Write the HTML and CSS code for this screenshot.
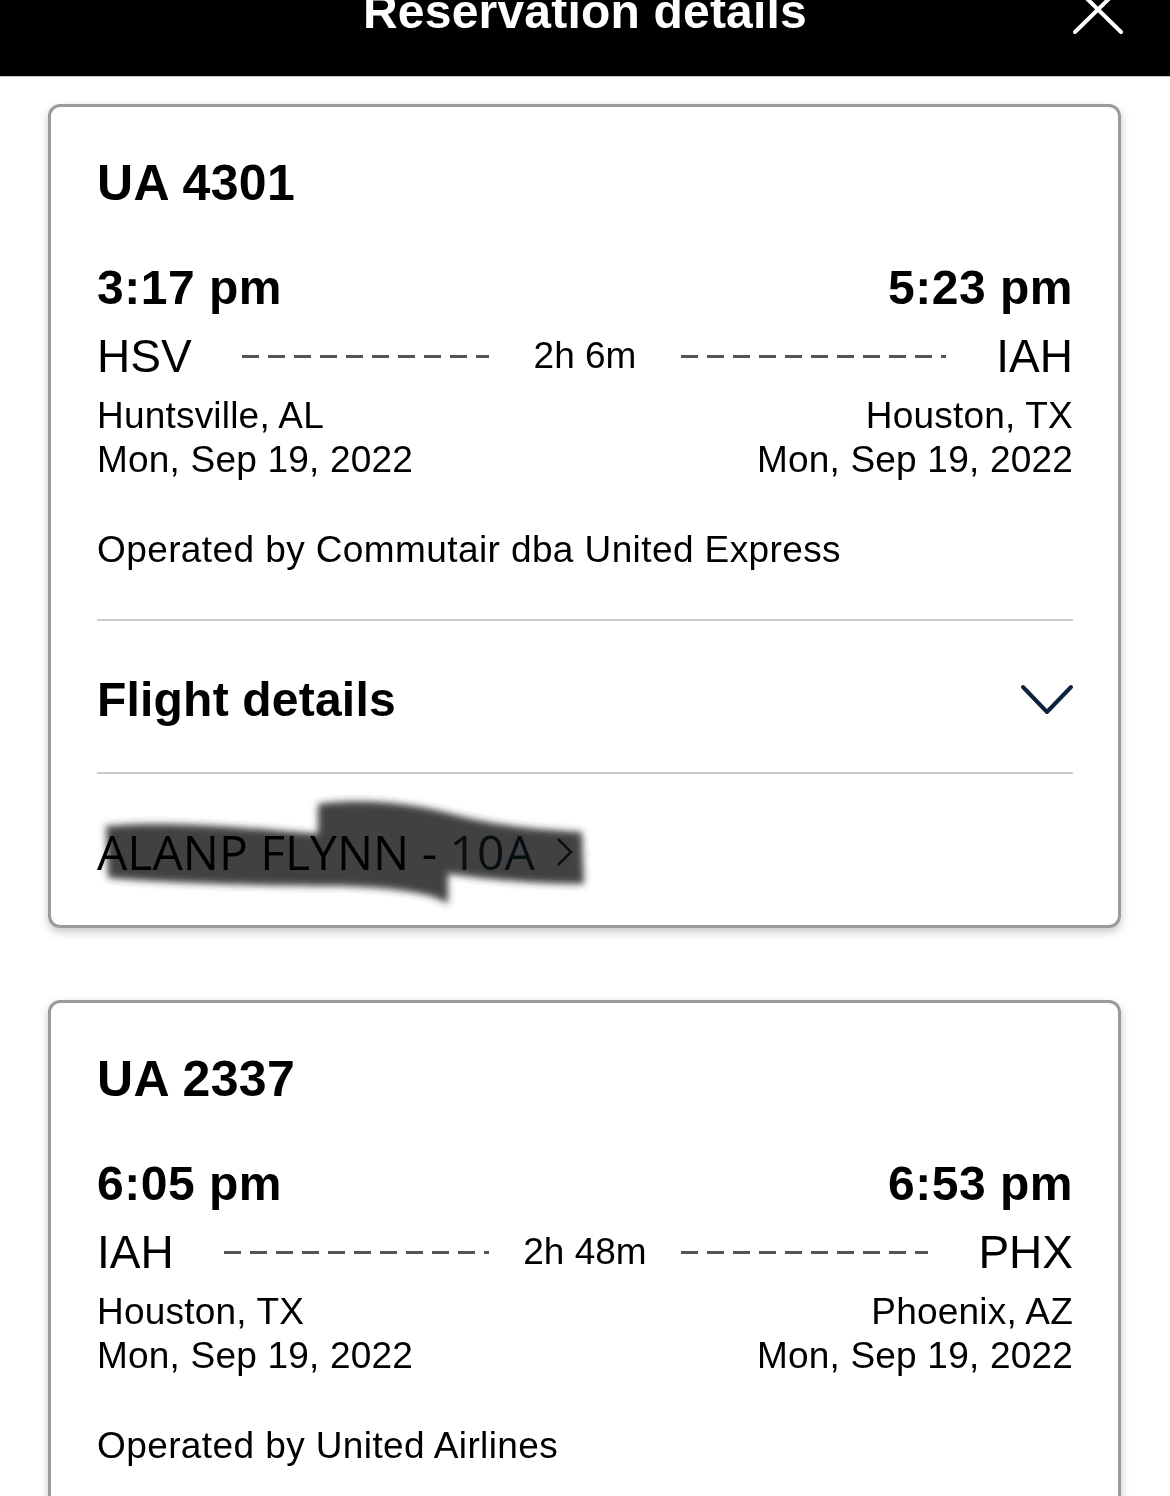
FILE: index.html
```html
<!DOCTYPE html>
<html lang="en">
<head>
    <meta charset="UTF-8">
    <meta name="viewport" content="width=device-width, initial-scale=1.0">
    <title>Reservation details</title>
    <link rel="stylesheet" href="styles.css">
</head>
<body>
    <div class="topbar">
        <div></div>
        <h1 class="topbar-title">Reservation details</h1>
        <div class="topbar-close">
            <svg width="50" height="50" viewBox="0 0 50 50">
                <line x1="2" y1="2" x2="48" y2="47" stroke="#fff" stroke-width="4" stroke-linecap="round"/>
                <line x1="48" y1="2" x2="2" y2="47" stroke="#fff" stroke-width="4" stroke-linecap="round"/>
            </svg>
        </div>
    </div>

    <div class="segment">
        <div class="flight-no">UA 4301</div>
        <div class="times">
            <span>3:17 pm</span>
            <span>5:23 pm</span>
        </div>
        <div class="route">
            <div class="route-side">
                <span class="code">HSV</span>
                <span class="dashes"></span>
            </div>
            <div class="duration">2h 6m</div>
            <div class="route-side">
                <span class="dashes"></span>
                <span class="code">IAH</span>
            </div>
        </div>
        <div class="places">
            <div>Huntsville, AL<br>Mon, Sep 19, 2022</div>
            <div class="right">Houston, TX<br>Mon, Sep 19, 2022</div>
        </div>
        <div class="operator">Operated by Commutair dba United Express</div>

        <div class="details-row">
            <span>Flight details</span>
            <svg width="56" height="34" viewBox="0 0 56 34">
                <polyline points="4,4 28,29 52,4" fill="none" stroke="#0c2340" stroke-width="4" stroke-linecap="round" stroke-linejoin="round"/>
            </svg>
        </div>

        <div class="passenger">
            <span class="pax-name">ALANP FLYNN - </span><span class="pax-seat">10A</span>
            <svg class="pax-arrow" width="20" height="32" viewBox="0 0 20 32">
                <polyline points="3,3 16,16 3,29" fill="none" stroke="#1b3a4a" stroke-width="2.5"/>
            </svg>
            <!-- redaction marks over the name -->
            <svg class="scribble" width="520" height="130" viewBox="0 0 520 130">
                <defs>
                    <filter id="smudge"><feGaussianBlur stdDeviation="3.5"/></filter>
                </defs>
                <g filter="url(#smudge)" fill="#262626">
                    <path d="M16 36 C 80 30, 160 38, 230 44 C 290 50, 330 58, 358 62 L 358 114 C 345 104, 310 98, 250 96 C 180 96, 90 94, 18 88 Z"/>
                    <path d="M228 14 C 270 8, 320 12, 370 26 C 420 38, 460 40, 492 42 L 494 94 C 450 94, 400 90, 360 84 C 330 76, 300 66, 228 64 Z"/>
                </g>
            </svg>
        </div>
    </div>

    <div class="segment">
        <div class="flight-no">UA 2337</div>
        <div class="times">
            <span>6:05 pm</span>
            <span>6:53 pm</span>
        </div>
        <div class="route">
            <div class="route-side">
                <span class="code">IAH</span>
                <span class="dashes"></span>
            </div>
            <div class="duration">2h 48m</div>
            <div class="route-side">
                <span class="dashes"></span>
                <span class="code">PHX</span>
            </div>
        </div>
        <div class="places">
            <div>Houston, TX<br>Mon, Sep 19, 2022</div>
            <div class="right">Phoenix, AZ<br>Mon, Sep 19, 2022</div>
        </div>
        <div class="operator">Operated by United Airlines</div>
    </div>
</body>
</html>
```

FILE: styles.css
```css
body {
    margin: 0;
    background-color: #fff;
    color: #000;
    font-family: "Liberation Sans", Arial, sans-serif;
    overflow: hidden;
}

.topbar {
    display: grid;
    grid-template-columns: 1fr auto 1fr;
    height: 76px;
    background-color: #000;
    border-bottom: 1px solid #c8c8c8;
}

.topbar-title {
    margin: 0;
    color: #fff;
    font-size: 48px;
    font-weight: 700;
    line-height: 24px;
    letter-spacing: 0.2px;
}

.topbar-close {
    justify-self: end;
    margin-top: -15px;
    margin-right: 47px;
}

.segment {
    margin: 27px 49px 72px 48px;
    padding: 48px 45px 45px 46px;
    border: 3px solid #9b9b9b;
    border-radius: 12px;
    box-shadow: 0 4px 10px rgba(0, 0, 0, 0.22);
}

.flight-no {
    font-size: 50px;
    font-weight: 700;
    line-height: 56px;
    letter-spacing: 0.4px;
}

.times {
    display: flex;
    justify-content: space-between;
    margin-top: 49px;
    font-size: 48px;
    font-weight: 700;
    line-height: 56px;
    letter-spacing: 0.5px;
}

.route {
    display: grid;
    grid-template-columns: 1fr 192px 1fr;
    align-items: center;
    margin-top: 12px;
    height: 56px;
}

.route-side {
    display: flex;
    align-items: center;
}

.code {
    font-size: 46px;
    line-height: 56px;
}

.dashes {
    flex: 1;
    height: 3px;
    margin: 0 50px;
    background: repeating-linear-gradient(90deg, #555 0 17px, transparent 17px 26px);
}

.route-side:first-child .dashes {
    margin-right: 0;
}

.route-side:last-child .dashes {
    margin-left: 0;
}

.duration {
    text-align: center;
    font-size: 37px;
    line-height: 44px;
}

.places {
    display: flex;
    justify-content: space-between;
    margin-top: 10px;
    font-size: 37px;
    line-height: 44px;
    letter-spacing: 0.2px;
}

.places .right {
    text-align: right;
}

.operator {
    margin-top: 46px;
    font-size: 37px;
    line-height: 44px;
    letter-spacing: 0.4px;
}

.details-row {
    display: flex;
    justify-content: space-between;
    align-items: center;
    margin-top: 47px;
    padding: 51px 0 44px;
    border-top: 2px solid #cbcbcb;
    border-bottom: 2px solid #cbcbcb;
    font-size: 48px;
    font-weight: 700;
    line-height: 56px;
    letter-spacing: 0.2px;
}

.details-row svg {
    margin-right: -2px;
}

.passenger {
    position: relative;
    display: flex;
    align-items: center;
    margin-top: 50px;
    font-family: "Open Sans", "Noto Sans", sans-serif;
    font-size: 48px;
    line-height: 56px;
}

.pax-name {
    white-space: pre;
}

.pax-seat {
    color: #1b3a4a;
}

.pax-arrow {
    margin-left: 20px;
}

.scribble {
    position: absolute;
    left: -7px;
    top: -34px;
    mix-blend-mode: multiply;
    opacity: 0.88;
}
```
